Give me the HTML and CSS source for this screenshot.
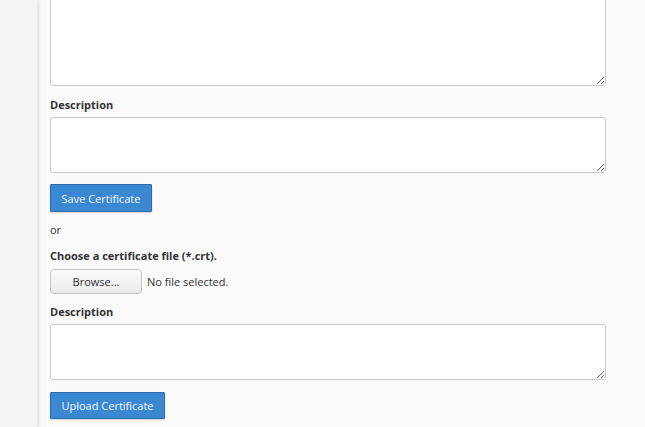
FILE: index.html
```html
<!DOCTYPE html>
<html lang="en">
<head>
    <meta charset="UTF-8">
    <meta name="viewport" content="width=device-width, initial-scale=1.0">
    <title>Install Certificate</title>
    <link rel="stylesheet" href="styles.css">
</head>
<body>
    <div class="layout">
        <div class="sidebar"></div>
        <div class="main">
            <form class="cert-form">
                <div class="field first-field">
                    <textarea class="text-box tall" aria-label="Certificate"></textarea>
                </div>
                <div class="field">
                    <label class="field-label">Description</label>
                    <textarea class="text-box"></textarea>
                </div>
                <button type="button" class="btn-primary save-btn">Save Certificate</button>

                <p class="or-text">or</p>

                <div class="field file-field">
                    <label class="field-label">Choose a certificate file (*.crt).</label>
                    <div class="file-row">
                        <button type="button" class="btn-browse">Browse...</button>
                        <span class="file-name">No file selected.</span>
                    </div>
                </div>
                <div class="field">
                    <label class="field-label">Description</label>
                    <textarea class="text-box"></textarea>
                </div>
                <button type="button" class="btn-primary upload-btn">Upload Certificate</button>
            </form>
        </div>
    </div>
</body>
</html>
```

FILE: styles.css
```css
body {
    margin: 0;
    font-family: "Open Sans", Arial, sans-serif;
    font-size: 11px;
    color: #333;
    background-color: #fafafa;
}

.layout {
    display: flex;
    min-height: 427px;
    overflow: hidden;
}

.sidebar {
    width: 37px;
    flex-shrink: 0;
    background-color: #f4f4f4;
    box-shadow: 1px 0 3px rgba(0, 0, 0, 0.12);
    border-right: 1px solid #e6e6e6;
}

.main {
    flex: 1;
    padding: 0 39px 0 12px;
}

.cert-form {
    display: flex;
    flex-direction: column;
    align-items: flex-start;
}

.field {
    width: 100%;
    margin-bottom: 11px;
}

.first-field {
    margin-top: -40px;
}

.field-label {
    display: block;
    font-weight: bold;
    line-height: 16px;
    margin-top: 0;
    margin-bottom: 4px;
}

.file-field {
    margin-bottom: 10px;
}

.file-field .field-label {
    margin-bottom: 5px;
}

.text-box {
    display: block;
    box-sizing: border-box;
    width: 100%;
    height: 56px;
    padding: 4px 6px;
    border: 1px solid #c8c8c8;
    border-radius: 3px;
    background-color: #fff;
    font-family: inherit;
    font-size: 11px;
}

.text-box.tall {
    height: 126px;
}

.btn-primary {
    font-family: inherit;
    font-size: 11px;
    color: #f2f6fb;
    background-color: #3a88d2;
    border: 1px solid #2a6db0;
    border-radius: 1px;
    box-shadow: 0 1px 2px rgba(0, 0, 0, 0.15);
    cursor: pointer;
}

.save-btn {
    width: 102px;
    height: 28px;
}

.upload-btn {
    width: 115px;
    height: 27px;
    margin-top: 1px;
}

.or-text {
    margin: 10px 0;
    line-height: 16px;
}

.file-row {
    display: flex;
    align-items: center;
    gap: 5px;
}

.btn-browse {
    width: 92px;
    height: 25px;
    font-family: inherit;
    font-size: 11px;
    color: #333;
    background: linear-gradient(#fbfbfb, #ebebeb);
    border: 1px solid #c4c4c4;
    border-radius: 4px;
    cursor: pointer;
}

.file-name {
    color: #333;
}
```
